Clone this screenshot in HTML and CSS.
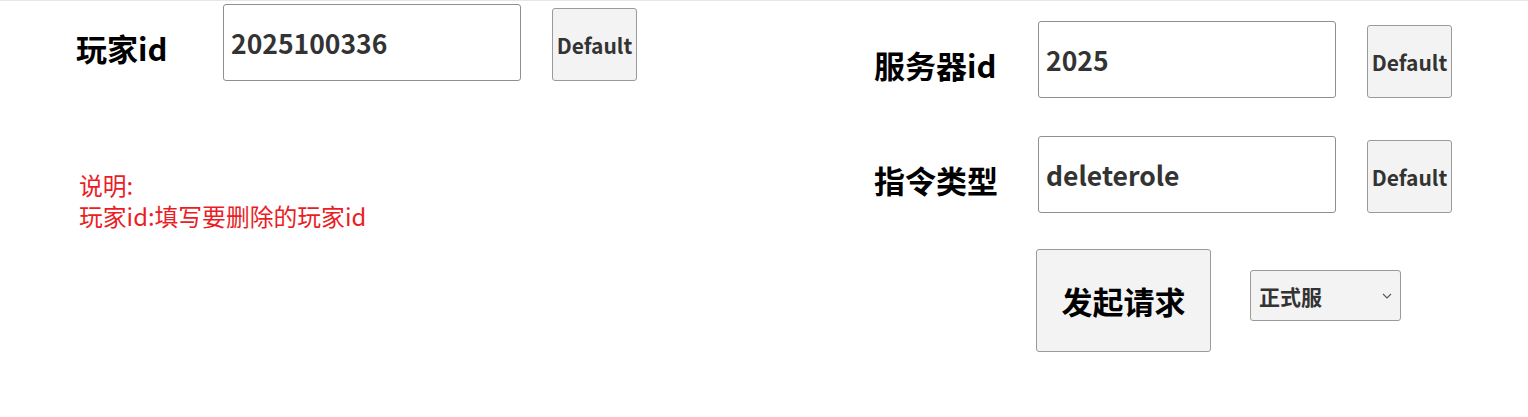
FILE: index.html
```html
<!DOCTYPE html>
<html lang="zh-CN">
<head>
<meta charset="utf-8">
<title>删除玩家</title>
<link rel="stylesheet" href="styles.css">
</head>
<body>
<div class="page">
  <div class="col col-left">
    <div class="row">
      <label class="label label-left">玩家id</label>
      <input class="field" type="text" value="2025100336">
      <button class="btn-default" type="button">Default</button>
    </div>
    <div class="note">
      <div>说明:</div>
      <div>玩家id:填写要删除的玩家id</div>
    </div>
  </div>
  <div class="col col-right">
    <div class="row">
      <label class="label label-right">服务器id</label>
      <input class="field" type="text" value="2025">
      <button class="btn-default" type="button">Default</button>
    </div>
    <div class="row">
      <label class="label label-right">指令类型</label>
      <input class="field" type="text" value="deleterole">
      <button class="btn-default" type="button">Default</button>
    </div>
    <div class="actions">
      <button class="btn-submit" type="button">发起请求</button>
      <div class="select-wrap">
        <select class="env">
          <option>正式服</option>
          <option>测试服</option>
        </select>
        <svg class="chevron" width="10" height="6" viewBox="0 0 10 6" aria-hidden="true">
          <path d="M1 1 L5 5 L9 1" fill="none" stroke="#555" stroke-width="1.1"/>
        </svg>
      </div>
    </div>
  </div>
</div>
</body>
</html>
```

FILE: styles.css
```css
html, body {
  margin: 0;
  padding: 0;
  background: #ffffff;
}

body {
  font-family: "Noto Sans CJK SC", "Noto Sans", sans-serif;
  border-top: 1px solid #e6e6e6;
}

.page {
  display: flex;
  align-items: flex-start;
  gap: 237px;
  padding-left: 76px;
}

.col {
  display: flex;
  flex-direction: column;
}

.col-left {
  padding-top: 3px;
}

.col-right {
  padding-top: 20px;
  gap: 38px;
}

.row {
  display: flex;
  align-items: flex-end;
}

.label {
  align-self: center;
  padding-top: 10px;
  font-size: 31px;
  font-weight: 700;
  color: #000;
  line-height: 1;
  white-space: nowrap;
}

.label-left {
  width: 147px;
}

.label-right {
  width: 164px;
}

.field {
  box-sizing: border-box;
  width: 298px;
  height: 77px;
  margin: 0;
  padding: 0 0 0 7px;
  border: 1px solid #8f8f8f;
  border-radius: 3px;
  background: #fff;
  font-family: "Noto Sans CJK SC", "Noto Sans", sans-serif;
  font-size: 26.5px;
  font-weight: 700;
  color: #333;
  outline: none;
}

.btn-default {
  box-sizing: border-box;
  width: 85px;
  height: 73px;
  margin: 0 0 0 31px;
  padding: 0;
  border: 1px solid #9a9a9a;
  border-radius: 3px;
  background: #f3f3f3;
  font-family: "Noto Sans CJK SC", "Noto Sans", sans-serif;
  font-size: 21px;
  font-weight: 700;
  color: #333;
}

.note {
  margin-top: 88px;
  padding-left: 3px;
  font-size: 23.8px;
  line-height: 31px;
  color: #ea1d25;
}

.actions {
  display: flex;
  align-items: center;
  margin-left: 162px;
  margin-top: -2px;
}

.btn-submit {
  box-sizing: border-box;
  width: 175px;
  height: 103px;
  margin: 0;
  padding: 0;
  border: 1px solid #9a9a9a;
  border-radius: 3px;
  background: #f3f3f3;
  font-family: "Noto Sans CJK SC", "Noto Sans", sans-serif;
  font-size: 31px;
  font-weight: 700;
  color: #000;
}

.select-wrap {
  position: relative;
  margin: 0 0 10px 39px;
}

.env {
  display: block;
  box-sizing: border-box;
  width: 151px;
  height: 51px;
  margin: 0;
  padding: 0 4px 0 8px;
  border: 1px solid #9a9a9a;
  border-radius: 3px;
  background-color: #f3f3f3;
  appearance: none;
  -webkit-appearance: none;
  font-family: "Noto Sans CJK SC", "Noto Sans", sans-serif;
  font-size: 21px;
  font-weight: 700;
  color: #333;
}

.chevron {
  position: absolute;
  right: 9px;
  top: 23px;
  pointer-events: none;
}
```
